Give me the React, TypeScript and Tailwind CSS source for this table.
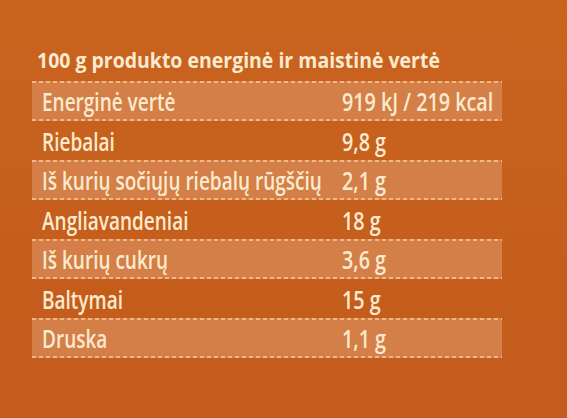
import React from "react";

const rows: { label: string; value: string; light: boolean }[] = [
  { label: "Energinė vertė", value: "919 kJ / 219 kcal", light: true },
  { label: "Riebalai", value: "9,8 g", light: false },
  { label: "Iš kurių sočiųjų riebalų rūgščių", value: "2,1 g", light: true },
  { label: "Angliavandeniai", value: "18 g", light: false },
  { label: "Iš kurių cukrų", value: "3,6 g", light: true },
  { label: "Baltymai", value: "15 g", light: false },
  { label: "Druska", value: "1,1 g", light: true },
];

function Dash() {
  return (
    <div className="h-[2px] w-full bg-[repeating-linear-gradient(90deg,#f2b784_0px,#f2b784_4px,transparent_4px,transparent_7px)]" />
  );
}

export default function App() {
  return (
    <div
      className="w-[567px] h-[418px] overflow-hidden bg-[linear-gradient(180deg,#c9641f_0%,#c55e1c_60%,#c35c1d_100%)] pt-[44px] pl-[32px] text-[#fbeacf]"
      style={{ fontFamily: "'Open Sans', 'Noto Sans', sans-serif" }}
    >
      <h1 className="pl-[5px] text-[22px] font-bold leading-[30px] whitespace-nowrap">
        <span className="inline-block origin-left scale-x-[0.885]">
          100 g produkto energinė ir maistinė vertė
        </span>
      </h1>
      <div className="mt-[7px] w-[470px] flex flex-col">
        {rows.map((r) => (
          <div
            key={r.label}
            className={`h-[39.5px] flex flex-col ${r.light ? "bg-[#d37f47]" : ""}`}
          >
            {r.light ? <Dash /> : <div className="h-[2px]" />}
            <div className="flex-1 grid grid-cols-[310px_1fr] items-center pt-[2px] text-[25px] font-semibold leading-none">
              <span className="pl-[10px] whitespace-nowrap">
                <span className="inline-block origin-left scale-x-[0.76]">{r.label}</span>
              </span>
              <span className="whitespace-nowrap">
                <span className="inline-block origin-left scale-x-[0.79]">{r.value}</span>
              </span>
            </div>
            {r.light ? <Dash /> : <div className="h-[2px]" />}
          </div>
        ))}
      </div>
    </div>
  );
}
